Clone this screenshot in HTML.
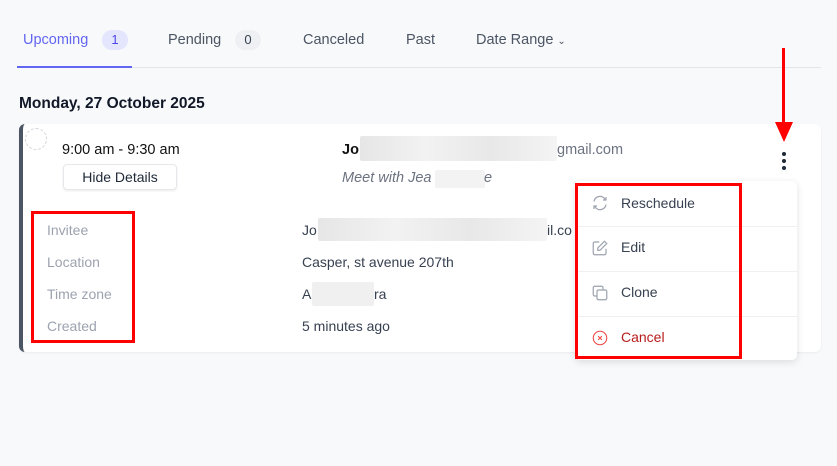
<!DOCTYPE html>
<html><head><style>
body{margin:0;width:837px;height:466px;background:#f8f9fb;font-family:"Liberation Sans",sans-serif;position:relative;overflow:hidden;color:#1f2937}
.a{position:absolute;white-space:nowrap}
.blur{position:absolute;background:linear-gradient(90deg,#e6e6e6,#f2f2f2,#e8e8e8,#f4f4f4);border-radius:2px}
.lbl{color:#9ca3af;font-size:14px}
.val{color:#374151;font-size:14px}
.mi{position:absolute;left:0;width:222px;height:45px;border-bottom:1px solid #f0f0f0}
.mi span{position:absolute;left:46px;top:13px;font-size:14px;color:#374151}
.mi svg{position:absolute;left:16px;top:13px}
</style></head><body>
<div class="a" style="left:23px;top:32px;font-size:14.5px;color:#6366f1">Upcoming</div>
<div class="a" style="left:102px;top:30px;width:26px;height:20px;border-radius:10px;background:#e3e6fd;color:#4f46e5;font-size:13px;text-align:center;line-height:20px">1</div>
<div class="a" style="left:168px;top:32px;font-size:14.5px;color:#4b5563">Pending</div>
<div class="a" style="left:235px;top:30px;width:26px;height:20px;border-radius:10px;background:#eef0f3;color:#374151;font-size:13px;text-align:center;line-height:20px">0</div>
<div class="a" style="left:303px;top:32px;font-size:14.5px;color:#4b5563">Canceled</div>
<div class="a" style="left:406px;top:32px;font-size:14.5px;color:#4b5563">Past</div>
<div class="a" style="left:476px;top:32px;font-size:14.5px;color:#4b5563">Date Range <span style="font-size:10px">&#8964;</span></div>
<div class="a" style="left:19px;top:67px;width:802px;height:1px;background:#e3e5ea"></div>
<div class="a" style="left:17px;top:66px;width:115px;height:2px;background:#6366f1"></div>
<div class="a" style="left:19px;top:95px;font-size:15.5px;font-weight:bold;color:#111827">Monday, 27 October 2025</div>

<div class="a" style="left:19px;top:124px;width:802px;height:228px;background:#fff;border-radius:6px;border-left:4px solid #4b5563;box-sizing:border-box;box-shadow:0 1px 2px rgba(0,0,0,.06)"></div>
<div class="a" style="left:25px;top:128px;width:20px;height:20px;border:1px dashed #d1d5db;border-radius:50%"></div>
<div class="a" style="left:62px;top:142px;font-size:14.5px;color:#111">9:00 am - 9:30 am</div>
<div class="a" style="left:63px;top:164px;width:112px;height:24px;border:1px solid #e5e7eb;border-radius:4px;box-shadow:0 1px 2px rgba(0,0,0,.08);font-size:14px;text-align:center;line-height:24px;color:#1f2937">Hide Details</div>
<div class="a" style="left:342px;top:142px;font-size:14.5px;color:#111;font-weight:bold">Jo</div>
<div class="blur" style="left:360px;top:136px;width:197px;height:25px"></div>
<div class="a" style="left:557px;top:142px;font-size:14.5px;color:#6b7280">gmail.com</div>
<div class="a" style="left:342px;top:170px;font-size:14.5px;color:#6b7280;font-style:italic">Meet with Jea</div>
<div class="blur" style="left:435px;top:170px;width:50px;height:18px;background:#f3f3f3"></div>
<div class="a" style="left:484px;top:170px;font-size:14.5px;color:#6b7280;font-style:italic">e</div>

<div class="a lbl" style="left:47px;top:222px">Invitee</div>
<div class="a lbl" style="left:47px;top:254px">Location</div>
<div class="a lbl" style="left:47px;top:286px">Time zone</div>
<div class="a lbl" style="left:47px;top:318px">Created</div>
<div class="a val" style="left:302px;top:222px">Jo</div>
<div class="blur" style="left:318px;top:218px;width:229px;height:23px"></div>
<div class="a val" style="left:547px;top:222px">il.co</div>
<div class="a val" style="left:302px;top:254px">Casper, st avenue 207th</div>
<div class="a val" style="left:302px;top:286px">A</div>
<div class="blur" style="left:312px;top:282px;width:62px;height:24px;background:#f0f0f0"></div>
<div class="a val" style="left:374px;top:286px">ra</div>
<div class="a val" style="left:302px;top:318px">5 minutes ago</div>
<div class="a" style="left:31px;top:211px;width:98px;height:126px;border:3px solid #f00"></div>

<svg class="a" style="left:776px;top:233px" width="15" height="12" viewBox="0 0 15 12"><path d="M4 1h7l3 4-6.5 6L1 5z" fill="none" stroke="#6366f1" stroke-width="1.5"/></svg>
<svg class="a" style="left:776px;top:278px" width="15" height="12" viewBox="0 0 15 12"><path d="M4 1h7l3 4-6.5 6L1 5z" fill="none" stroke="#6366f1" stroke-width="1.5"/></svg>

<div class="a" style="left:782px;top:152px;width:4px;height:4px;border-radius:2px;background:#1f2937"></div>
<div class="a" style="left:782px;top:159px;width:4px;height:4px;border-radius:2px;background:#1f2937"></div>
<div class="a" style="left:782px;top:166px;width:4px;height:4px;border-radius:2px;background:#1f2937"></div>
<div class="a" style="left:782px;top:48px;width:3px;height:75px;background:#f00"></div>
<div class="a" style="left:775px;top:122px;width:0;height:0;border-left:9px solid transparent;border-right:9px solid transparent;border-top:20px solid #f00"></div>

<div class="a" style="left:575px;top:181px;width:222px;height:179px;background:#fff;border-radius:5px;box-shadow:0 2px 8px rgba(0,0,0,.12)">
<div class="mi" style="top:0"><svg width="18" height="18" viewBox="0 0 24 24" fill="none" stroke="#9ca3af" stroke-width="1.6"><path d="M4 10a8 8 0 0 1 14-4l2 2M20 4v4h-4M20 14a8 8 0 0 1-14 4l-2-2M4 20v-4h4"/></svg><span style="top:14px">Reschedule</span></div>
<div class="mi" style="top:45px"><svg width="18" height="18" viewBox="0 0 24 24" fill="none" stroke="#9ca3af" stroke-width="1.6"><path d="M11 4H5a2 2 0 0 0-2 2v13a2 2 0 0 0 2 2h13a2 2 0 0 0 2-2v-6M18 3l3 3-9 9H9v-3z"/></svg><span>Edit</span></div>
<div class="mi" style="top:90px"><svg width="18" height="18" viewBox="0 0 24 24" fill="none" stroke="#9ca3af" stroke-width="1.6"><rect x="8" y="8" width="13" height="13" rx="2"/><path d="M16 8V5a2 2 0 0 0-2-2H5a2 2 0 0 0-2 2v9a2 2 0 0 0 2 2h3"/></svg><span>Clone</span></div>
<div class="mi" style="top:135px;border:none"><svg width="18" height="18" viewBox="0 0 24 24" fill="none" stroke="#ef4444" stroke-width="1.4"><circle cx="12" cy="12" r="9"/><path d="M9.5 9.5l5 5M14.5 9.5l-5 5"/></svg><span style="color:#b91c1c">Cancel</span></div>
</div>
<div class="a" style="left:575px;top:183px;width:161px;height:170px;border:3px solid #f00"></div>
</body></html>
